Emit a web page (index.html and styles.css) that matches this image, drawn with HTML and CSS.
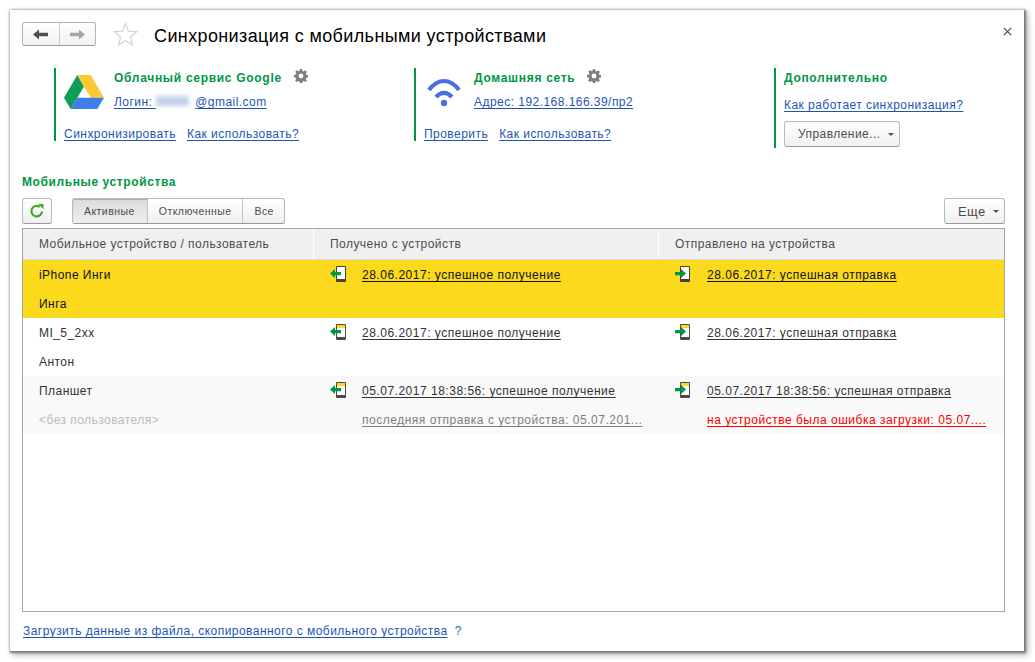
FILE: index.html
```html
<!DOCTYPE html>
<html>
<head>
  <meta charset="utf-8">
  <link rel="stylesheet" href="styles.css">
</head>
<body>
  <svg class="defs" width="0" height="0">
    <symbol id="gear" viewBox="0 0 14 14">
      <path fill="#7f7f7f" fill-rule="evenodd" d="M5.8 0h2.4l.3 1.9 1.1.5 1.6-1.1 1.7 1.7-1.1 1.6.5 1.1 1.9.3v2.4l-1.9.3-.5 1.1 1.1 1.6-1.7 1.7-1.6-1.1-1.1.5-.3 1.9H5.8l-.3-1.9-1.1-.5-1.6 1.1-1.7-1.7 1.1-1.6-.5-1.1L0 8.2V5.8l1.9-.3.5-1.1-1.1-1.6 1.7-1.7 1.6 1.1 1.1-.5zM7 4.6a2.4 2.4 0 1 0 0 4.8 2.4 2.4 0 0 0 0-4.8z"/>
    </symbol>
    <symbol id="device-in" viewBox="0 0 16 16">
      <rect x="6" y="0" width="10" height="16" rx="1" fill="#4a3f35"/>
      <rect x="7" y="1" width="8" height="12" fill="#fff"/>
      <path fill="#009646" d="M0 7.500 5 3v3h6v3.200H5V12z"/>
    </symbol>
    <symbol id="device-in-y" viewBox="0 0 16 16">
      <rect x="6" y="0" width="10" height="16" rx="1" fill="#4a4a4a"/>
      <rect x="7" y="1" width="8" height="12" fill="#fff"/>
      <rect x="7" y="1" width="8" height="3" fill="#fbd91d"/>
      <path fill="#009646" d="M0 7.500 5 3v3h6v3.200H5V12z"/>
    </symbol>
    <symbol id="device-out" viewBox="0 0 16 16">
      <rect x="5" y="0" width="10" height="16" rx="1" fill="#4a3f35"/>
      <rect x="6" y="1" width="8" height="12" fill="#fff"/>
      <path fill="#009646" d="M0 6h6V3l5 4.500L6 12V9.200H0z"/>
    </symbol>
    <symbol id="device-out-y" viewBox="0 0 16 16">
      <rect x="5" y="0" width="10" height="16" rx="1" fill="#4a4a4a"/>
      <rect x="6" y="1" width="8" height="12" fill="#fff"/>
      <rect x="6" y="1" width="8" height="3" fill="#fbd91d"/>
      <path fill="#009646" d="M0 6h6V3l5 4.500L6 12V9.200H0z"/>
    </symbol>
  </svg>

  <div class="window">
    <span class="close">
      <svg width="9" height="9" viewBox="0 0 9 9"><path d="M.8.8l7.400 7.400M8.200.8.8 8.200" stroke="#444" stroke-width="1.100" fill="none"/></svg>
    </span>

    <div class="head">
      <div class="nav">
        <span class="nav-btn">
          <svg width="15" height="11" viewBox="0 0 15 11"><path fill="#4d4d4d" d="M0 5.500 6 .5v3.200h9v3.600H6v3.200z"/></svg>
        </span>
        <span class="nav-btn">
          <svg width="15" height="11" viewBox="0 0 15 11"><path fill="#a6a6a6" d="M15 5.500 9 .5v3.200H0v3.600h9v3.200z"/></svg>
        </span>
      </div>
      <svg class="star" width="25" height="24" viewBox="0 0 25 24"><path d="M12.500 1.500l3 7.700 8.300.5-6.400 5.300 2.100 8-7-4.500-7 4.500 2.100-8L1.200 9.700l8.300-.5z" fill="#fff" stroke="#cfd3d8" stroke-width="1.200"/></svg>
      <h1 class="title">Синхронизация с мобильными устройствами</h1>
    </div>

    <div class="panels">
      <div class="panel">
        <div class="panel-top">
          <svg class="logo" width="40" height="34" viewBox="0 0 40 34">
            <path fill="#0f9d58" d="M13.300 0 0 22.800 6.700 34 20 11.500z"/>
            <path fill="#fcc934" d="M13.300 0h13.400L40 22.800H26.700z"/>
            <path fill="#3f7ee8" d="M6.700 34h26.600L40 22.800H13.400z"/>
          </svg>
          <div>
            <div class="panel-name">Облачный сервис Google <svg class="gear" width="14" height="14"><use href="#gear"/></svg></div>
            <a class="link">Логин: <span class="blur"></span>@gmail.com</a>
          </div>
        </div>
        <div class="panel-links"><a class="link">Синхронизировать</a><a class="link">Как использовать?</a></div>
      </div>

      <div class="panel">
        <div class="panel-top">
          <svg class="logo" width="40" height="34" viewBox="0 0 40 34">
            <g fill="none" stroke="#4a6fe0" stroke-width="4.200">
              <path d="M5 15c9-12 21-12 30 0"/>
              <path d="M12 22c5-5.500 11-5.500 16 0"/>
            </g>
            <circle cx="20" cy="28" r="3.200" fill="#4a6fe0"/>
          </svg>
          <div>
            <div class="panel-name">Домашняя сеть <svg class="gear" width="14" height="14"><use href="#gear"/></svg></div>
            <a class="link">Адрес: 192.168.166.39/пр2</a>
          </div>
        </div>
        <div class="panel-links"><a class="link">Проверить</a><a class="link">Как использовать?</a></div>
      </div>

      <div class="panel panel-last">
        <div class="panel-name">Дополнительно</div>
        <a class="link">Как работает синхронизация?</a>
        <span class="btn btn-manage">Управление...<i class="caret"></i></span>
      </div>
    </div>

    <h2 class="section">Мобильные устройства</h2>

    <div class="toolbar">
      <span class="btn btn-refresh">
        <svg width="16" height="16" viewBox="0 0 16 16"><path d="M13 8.500A5.300 5.300 0 1 1 10.800 3.800" fill="none" stroke="#43a52c" stroke-width="2.200"/><path fill="#43a52c" d="M9.200 0.800 14.500 1v5.300z"/></svg>
      </span>
      <div class="tabs">
        <span class="tab tab-on">Активные</span>
        <span class="tab">Отключенные</span>
        <span class="tab">Все</span>
      </div>
      <span class="btn btn-more">Еще<i class="caret"></i></span>
    </div>

    <div class="grid">
      <div class="row row-head">
        <div class="cell">Мобильное устройство / пользователь</div>
        <div class="cell">Получено с устройств</div>
        <div class="cell">Отправлено на устройства</div>
      </div>

      <div class="row row-current">
        <div class="cell"><div>iPhone Инги</div><div>Инга</div></div>
        <div class="cell cell-icon">
          <svg class="dev" width="16" height="16"><use href="#device-in"/></svg>
          <div><a class="log">28.06.2017: успешное получение</a></div>
        </div>
        <div class="cell cell-icon">
          <svg class="dev" width="16" height="16"><use href="#device-out"/></svg>
          <div><a class="log">28.06.2017: успешная отправка</a></div>
        </div>
      </div>

      <div class="row">
        <div class="cell"><div>MI_5_2xx</div><div>Антон</div></div>
        <div class="cell cell-icon">
          <svg class="dev" width="16" height="16"><use href="#device-in-y"/></svg>
          <div><a class="log">28.06.2017: успешное получение</a></div>
        </div>
        <div class="cell cell-icon">
          <svg class="dev" width="16" height="16"><use href="#device-out-y"/></svg>
          <div><a class="log">28.06.2017: успешная отправка</a></div>
        </div>
      </div>

      <div class="row row-alt">
        <div class="cell"><div>Планшет</div><div class="muted">&lt;без пользователя&gt;</div></div>
        <div class="cell cell-icon">
          <svg class="dev" width="16" height="16"><use href="#device-in-y"/></svg>
          <div>
            <div><a class="log">05.07.2017 18:38:56: успешное получение</a></div>
            <div><a class="log log-grey">последняя отправка с устройства: 05.07.201...</a></div>
          </div>
        </div>
        <div class="cell cell-icon">
          <svg class="dev" width="16" height="16"><use href="#device-out-y"/></svg>
          <div>
            <div><a class="log">05.07.2017 18:38:56: успешная отправка</a></div>
            <div><a class="log log-red">на устройстве была ошибка загрузки: 05.07....</a></div>
          </div>
        </div>
      </div>
    </div>

    <div class="foot"><a class="link">Загрузить данные из файла, скопированного с мобильного устройства</a><span class="help">?</span></div>
  </div>
</body>
</html>
```

FILE: styles.css
```css
html, body {
  margin: 0;
  background: #fff;
}
body {
  font-family: "Liberation Sans", Arial, sans-serif;
  font-size: 12px;
  color: #333;
  width: 1035px;
  height: 662px;
  overflow: hidden;
}
.defs {
  position: absolute;
}
.window {
  position: relative;
  box-sizing: border-box;
  width: 1014px;
  height: 641px;
  margin: 10px 0 0 10px;
  padding: 12px 19px 0 12px;
  background: #fff;
  box-shadow: 1px 1px 2px 1px #777, 3px 3px 6px 1px #bbb, 0 0 3px #ddd;
}
.close {
  position: absolute;
  top: 15px;
  right: 12px;
}
.head {
  display: flex;
  align-items: center;
  height: 24px;
}
.nav {
  display: flex;
  width: 74px;
  height: 24px;
  box-sizing: border-box;
  border: 1px solid #b5b5b5;
  border-bottom-color: #999;
  border-radius: 3px;
  background: linear-gradient(#fff, #f1f1f1);
}
.nav-btn {
  flex: 1;
  display: flex;
  align-items: center;
  justify-content: center;
}
.nav-btn + .nav-btn {
  border-left: 1px solid #ccc;
}
.star {
  margin-left: 17px;
}
.title {
  margin: 0 0 0 16px;
  padding-top: 4px;
  font-size: 18px;
  font-weight: normal;
  letter-spacing: .38px;
  color: #000;
}
.panels {
  display: flex;
  margin: 22px 0 0 32px;
  height: 80px;
}
.panel {
  flex: none;
  box-sizing: border-box;
  width: 360px;
  height: 73px;
  border-left: 2px solid #009646;
  padding-left: 8px;
}
.panel-last {
  width: 230px;
  height: 80px;
}
.panel-top {
  display: flex;
  height: 56px;
}
.logo {
  margin: 7px 10px 0 0;
}
.panel-name {
  font-weight: bold;
  letter-spacing: .7px;
  color: #009646;
  line-height: 20px;
  height: 25px;
}
.panel-last .panel-name {
  height: 30px;
}
.gear {
  vertical-align: -1px;
  margin-left: 8px;
}
.link {
  color: #1d55b5;
  text-decoration: underline;
  text-underline-offset: 2px;
  letter-spacing: .46px;
}
.panel-top .link {
  display: inline-block;
  margin-top: 2px;
}
.panel-links {
  display: flex;
  gap: 11px;
  margin-top: 3px;
}
.blur {
  display: inline-block;
  width: 33px;
  height: 10px;
  background: #c3d0ea;
  filter: blur(2px);
  margin-right: 6px;
}
.btn {
  display: inline-flex;
  align-items: center;
  box-sizing: border-box;
  height: 26px;
  border: 1px solid #b9b9b9;
  border-bottom-color: #999;
  border-radius: 3px;
  background: linear-gradient(#fff, #f0f0f0);
  color: #4d4d4d;
  letter-spacing: .45px;
}
.btn-manage {
  display: flex;
  width: 116px;
  margin-top: 9px;
  padding-left: 13px;
}
.caret {
  flex: none;
  width: 0;
  height: 0;
  margin-left: 7px;
  border: 3px solid transparent;
  border-top: 3px solid #555;
  border-bottom: 0;
}
.section {
  margin: 26px 0 0;
  height: 24px;
  font-size: 12px;
  line-height: 16px;
  letter-spacing: .6px;
  color: #009646;
}
.toolbar {
  display: flex;
  align-items: flex-start;
  height: 30px;
}
.btn-refresh {
  width: 30px;
  justify-content: center;
}
.tabs {
  display: flex;
  height: 26px;
  margin-left: 20px;
  box-sizing: border-box;
  border: 1px solid #b9b9b9;
  border-bottom-color: #999;
  border-radius: 3px;
  font-size: 10.500px;
  background: linear-gradient(#fff, #f0f0f0);
}
.tab {
  display: flex;
  align-items: center;
  padding: 0 11px;
  color: #4d4d4d;
  letter-spacing: .45px;
  border-left: 1px solid #c4c4c4;
}
.tab:first-child {
  border-left: 0;
  padding-right: 12px;
}
.tab:last-child {
  padding-right: 10px;
}
.tab-on {
  background: linear-gradient(#dcdcdc, #efefef);
  box-shadow: inset 0 1px 1px #aaa;
}
.btn-more {
  margin-left: auto;
  width: 61px;
  padding-left: 13px;
  font-size: 13px;
}
.grid {
  box-sizing: border-box;
  height: 384px;
  border: 1px solid #a6a6a6;
}
.row {
  display: grid;
  grid-template-columns: 290px 345px 1fr;
  box-sizing: border-box;
  height: 58px;
  padding-top: 1px;
  line-height: 29px;
  letter-spacing: .45px;
}
.row-head {
  height: 31px;
  padding-top: 0;
  line-height: 30px;
  border-bottom: 1px solid #dcdcdc;
  color: #4d4d4d;
  background: #f0f0f0;
}
.row-head .cell + .cell {
  border-left: 1px solid #fff;
}
.row-current {
  background: #fbd91d;
  color: #111;
}
.row-alt {
  background: #f9f9f9;
}
.cell {
  padding-left: 16px;
  white-space: nowrap;
  overflow: hidden;
}
.cell-icon {
  display: flex;
}
.dev {
  flex: none;
  margin: 5px 16px 0 1px;
}
.log {
  color: inherit;
  text-decoration: underline;
  text-underline-offset: 2px;
  letter-spacing: .51px;
}
.log-grey {
  color: #7f7f7f;
}
.log-red {
  color: #f00;
}
.muted {
  color: #bbb;
}
.foot {
  margin: 11px 0 0 1px;
  line-height: 16px;
}
.help {
  margin-left: 7px;
  color: #1d6fb5;
}
```
